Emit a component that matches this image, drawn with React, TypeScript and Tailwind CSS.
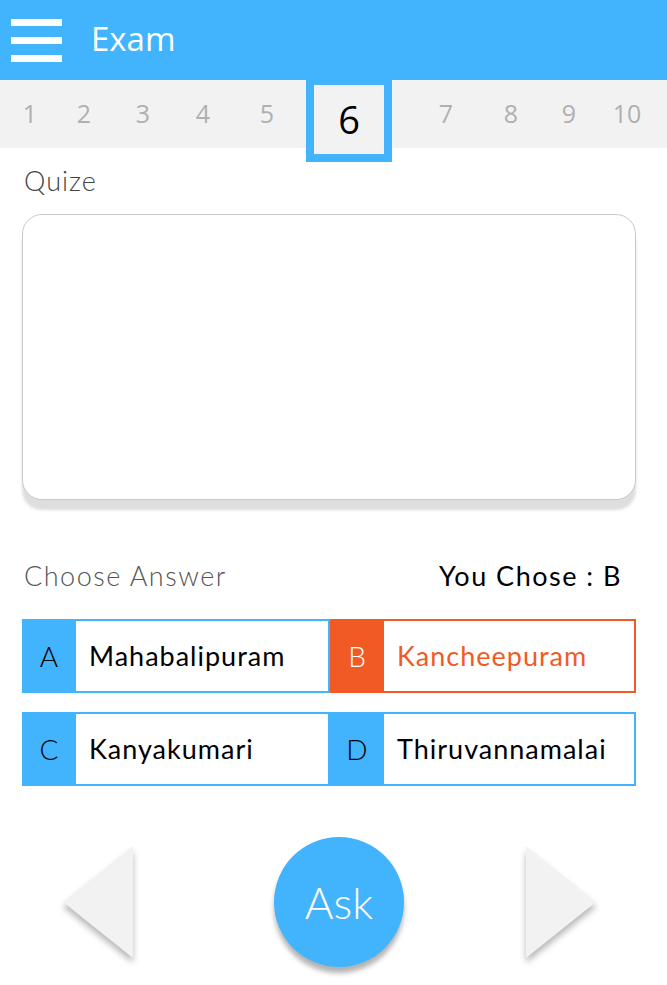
import React from 'react';

const tabs = [
  { n: '1', cls: 'w-[60px]' },
  { n: '2', cls: 'w-[48px]' },
  { n: '3', cls: 'w-[70px]' },
  { n: '4', cls: 'w-[50px]' },
  { n: '5', cls: 'w-[78px]' },
];

const tabsAfter = [
  { n: '7', cls: 'w-[90px] pl-[18px]' },
  { n: '8', cls: 'w-[58px]' },
  { n: '9', cls: 'w-[58px]' },
  { n: '10', cls: 'w-[58px]' },
];

const options = [
  { key: 'A', text: 'Mahabalipuram', chosen: false },
  { key: 'B', text: 'Kancheepuram', chosen: true },
  { key: 'C', text: 'Kanyakumari', chosen: false },
  { key: 'D', text: 'Thiruvannamalai', chosen: false },
];

function Option({ k, text, chosen }: { k: string; text: string; chosen: boolean }) {
  return (
    <div
      className={
        chosen
          ? 'flex h-[74px] border-2 border-[#f15a24] bg-white'
          : 'flex h-[74px] border-2 border-[#42b4fe] bg-white'
      }
    >
      <div
        className={
          chosen
            ? 'w-[54px] -ml-[2px] -my-[2px] bg-[#f15a24] text-white flex items-center justify-center text-[28px] font-light'
            : 'w-[54px] -ml-[2px] -my-[2px] bg-[#42b4fe] text-black flex items-center justify-center text-[28px] font-light'
        }
      >
        {k}
      </div>
      <div
        className={
          chosen
            ? 'flex items-center pl-[13px] text-[27px] text-[#f15a24] tracking-[1px]'
            : 'flex items-center pl-[13px] text-[27px] text-black tracking-[1px]'
        }
      >
        {text}
      </div>
    </div>
  );
}

function Triangle({ dir }: { dir: 'left' | 'right' }) {
  return (
    <svg width="80" height="124" viewBox="0 0 80 124" className="drop-shadow-[0_5px_3px_rgba(0,0,0,0.28)]">
      {dir === 'left' ? (
        <polygon points="1,62 71,6 71,118" fill="#f2f2f2" />
      ) : (
        <polygon points="0,6 70,62 0,118" fill="#f2f2f2" />
      )}
    </svg>
  );
}

export default function App() {
  return (
    <div className="w-[667px] h-[985px] bg-white overflow-hidden" style={{ fontFamily: 'Lato, "Open Sans", sans-serif' }}>
      {/* Header */}
      <div className="h-[80px] bg-[#42b4fe] flex items-center">
        <div className="ml-[11px] w-[51px] flex flex-col gap-[11px]">
          <span className="block h-[7px] bg-white" />
          <span className="block h-[7px] bg-white" />
          <span className="block h-[7px] bg-white" />
        </div>
        <h1 className="ml-[29px] text-white text-[33px] -mt-[2px]" style={{ fontFamily: '"Open Sans", sans-serif' }}>
          Exam
        </h1>
      </div>

      {/* Question tabs */}
      <div className="h-[68px] bg-[#f2f2f2] flex items-start" style={{ fontFamily: '"Open Sans", sans-serif' }}>
        {tabs.map((t) => (
          <span key={t.n} className={t.cls + ' h-[68px] flex items-center justify-center text-[25px] text-[#b0b0b0]'}>
            {t.n}
          </span>
        ))}
        <div className="w-[86px] h-[82px] border-[8px] border-t-[5px] border-[#42b4fe] bg-[#f2f2f2] flex items-center justify-center text-[38px] text-black relative z-10">
          6
        </div>
        {tabsAfter.map((t) => (
          <span key={t.n} className={t.cls + ' h-[68px] flex items-center justify-center text-[25px] text-[#b0b0b0]'}>
            {t.n}
          </span>
        ))}
      </div>

      <div className="pl-[22px] pr-[31px]">
        <div className="mt-[17px] ml-[2px] text-[27px] font-light text-[#444] leading-[32px] tracking-[1px]">Quize</div>

        <div className="mt-[17px] h-[286px] rounded-[20px] border-[1.5px] border-[#c9c9c9] bg-white shadow-[0_10px_3px_#dedede]" />

        <div className="mt-[60px] flex items-center justify-between h-[32px]">
          <span className="ml-[2px] text-[27px] font-light text-[#555] tracking-[1.5px]">Choose Answer</span>
          <span className="mr-[14px] text-[27px] text-black tracking-[1.5px]">You Chose : B</span>
        </div>

        <div className="mt-[27px] grid grid-cols-[308px_306px] gap-y-[19px]">
          {options.map((o) => (
            <Option key={o.key} k={o.key} text={o.text} chosen={o.chosen} />
          ))}
        </div>

        {/* Navigation */}
        <div className="mt-[51px] flex items-center pl-[40px]">
          <Triangle dir="left" />
          <button className="ml-[132px] w-[130px] h-[130px] rounded-full bg-[#42b4fe] text-white text-[44px] font-light flex items-center justify-center shadow-[0_6px_5px_rgba(0,0,0,0.3)]">
            Ask
          </button>
          <div className="ml-[122px]">
            <Triangle dir="right" />
          </div>
        </div>
      </div>
    </div>
  );
}
